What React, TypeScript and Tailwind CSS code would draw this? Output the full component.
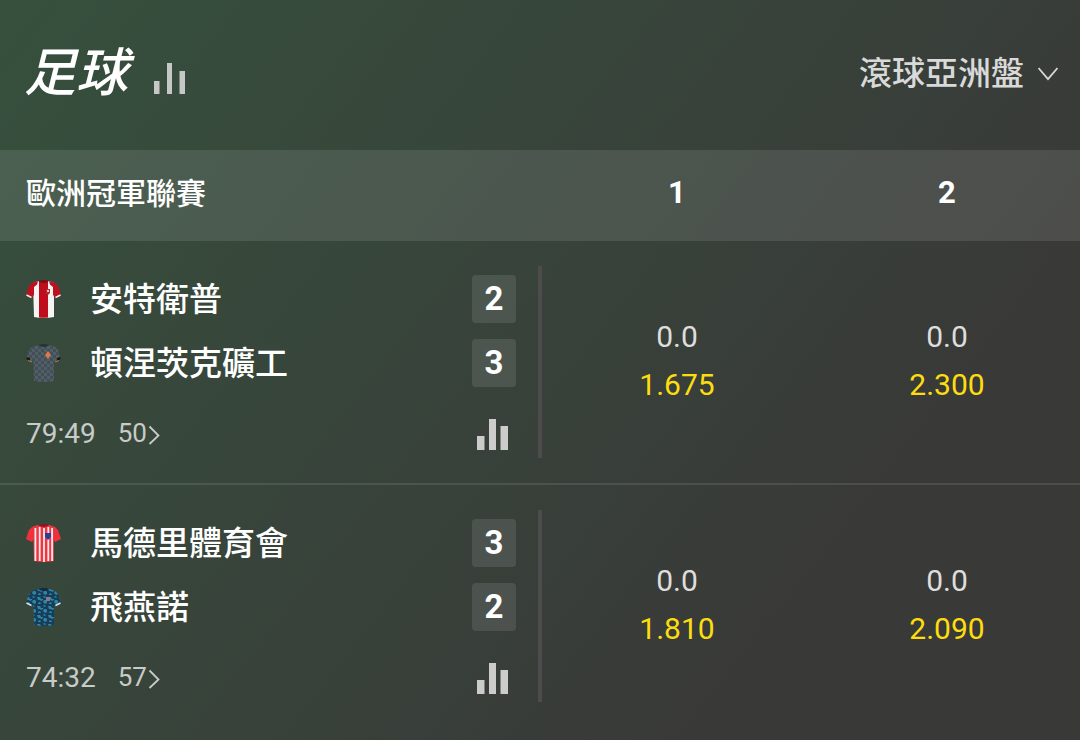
import React, { useState } from 'react';

type Team = { name: string; score: number; shirt: React.ReactNode };
type Match = { id: string; time: string; markets: number; teams: Team[]; odds: { line: string; price: string }[] };

const BODY = 'M12 2 Q18 4 23 2 L28 4 L28 38 Q18 40 8 38 L7 4 Z';
const LEFT_SLEEVE = 'M12 2 L6 4 Q3 6 2 10 L0 16 L6 19 L9 14 Z';
const RIGHT_SLEEVE = 'M23 2 L29 4 Q32 6 33 10 L35 16 L29 19 L26 14 Z';
const COLLAR = 'M12 2 Q18 0 23 2 Q18 6 12 2 Z';

function RedWhiteShirt() {
  return (
    <svg className="w-9 h-10" viewBox="0 0 36 40" aria-hidden="true">
      <path d={BODY} fill="#f6f3f3" />
      <path d={LEFT_SLEEVE} fill="#c01020" />
      <path d={RIGHT_SLEEVE} fill="#c01020" />
      <path d="M8 8 L13 4 V20 H8 Z M22 4 L27 8 V20 H22 Z" fill="#f6f3f3" />
      <path d="M0.5 16 L5.5 18.5 M34.5 16 L29.5 18.5" stroke="#f3eeee" strokeWidth="1.5" />
      <path d="M13 2 Q18 4 22 2 L22 38.5 Q18 39 13 38.5 Z" fill="#c00d1d" />
      <path d={COLLAR} fill="#7c0c16" />
      <path d="M20 10 h4 v4 l-2 2 l-2 -2 Z" fill="#b72c2f" />
      <path d="M21 11 h2 v2 h-2 Z" fill="#e8c9b0" />
    </svg>
  );
}

function CheckedShirt() {
  return (
    <svg className="w-9 h-10" viewBox="0 0 36 40" aria-hidden="true">
      <defs>
        <pattern id="checks" width="6" height="6" patternUnits="userSpaceOnUse">
          <rect width="6" height="6" fill="#434f57" />
          <path d="M0 0 h3 v3 h-3 Z M3 3 h3 v3 h-3 Z" fill="#515e66" />
        </pattern>
      </defs>
      <path d={LEFT_SLEEVE} fill="url(#checks)" />
      <path d={RIGHT_SLEEVE} fill="url(#checks)" />
      <path d={BODY} fill="url(#checks)" />
      <path d={COLLAR} fill="#273238" />
      <path d="M0 16 L4 18 L4 15 L1 14 Z M35 16 L31 18 L31 15 L34 14 Z" fill="#17191b" />
      <path d="M2 17.5 L6 19 M33 17.5 L29 19" stroke="#c77343" strokeWidth="1" fill="none" />
      <path d="M22 8 L25 12 L22 16 L19 12 Z" fill="#e0764a" />
    </svg>
  );
}

function StripedShirt() {
  return (
    <svg className="w-9 h-10" viewBox="0 0 36 40" aria-hidden="true">
      <path d={LEFT_SLEEVE} fill="#f0303c" />
      <path d={RIGHT_SLEEVE} fill="#f0303c" />
      <path d={BODY} fill="#ee3541" />
      <path
        d="M8.5 5 h1.8 v33 h-1.8 Z M12.8 4 h1.8 v34 h-1.8 Z M17.1 5 h1.8 v34 h-1.8 Z M21.4 4 h1.8 v34 h-1.8 Z M25.2 5 h1.8 v33 h-1.8 Z"
        fill="#f8eaec"
      />
      <path d={COLLAR} fill="#8d1620" />
      <path d="M19 10 h6 v4 l-3 3 l-3 -3 Z" fill="#2c3f91" />
    </svg>
  );
}

function CamoShirt() {
  return (
    <svg className="w-9 h-10" viewBox="0 0 36 40" aria-hidden="true">
      <defs>
        <pattern id="camo" width="11" height="9" patternUnits="userSpaceOnUse">
          <rect width="11" height="9" fill="#173d5c" />
          <path d="M0 1 h3 l1 2 h2 v1 l-2 1 l-1 -1 h-2 Z M6 6 l1 -2 h2 l1 1 v2 l-2 1 Z M1 7 l2 -1 l1 2 h-3 Z M7 0 l2 1 l-1 1 l-2 -1 Z" fill="#2f86a0" />
        </pattern>
      </defs>
      <path d={LEFT_SLEEVE} fill="url(#camo)" />
      <path d={RIGHT_SLEEVE} fill="url(#camo)" />
      <path d={BODY} fill="url(#camo)" />
      <path d={COLLAR} fill="#132942" />
      <path d="M0.5 16 L5.5 18.5 M34.5 16 L29.5 18.5" stroke="#d8e4e8" strokeWidth="1.5" fill="none" />
      <path d="M20 10 h4 v4 h-4 Z" fill="#8b7b8d" />
    </svg>
  );
}

const matches: Match[] = [
  {
    id: 'm1',
    time: '79:49',
    markets: 50,
    teams: [
      { name: '安特衛普', score: 2, shirt: <RedWhiteShirt /> },
      { name: '頓涅茨克礦工', score: 3, shirt: <CheckedShirt /> },
    ],
    odds: [
      { line: '0.0', price: '1.675' },
      { line: '0.0', price: '2.300' },
    ],
  },
  {
    id: 'm2',
    time: '74:32',
    markets: 57,
    teams: [
      { name: '馬德里體育會', score: 3, shirt: <StripedShirt /> },
      { name: '飛燕諾', score: 2, shirt: <CamoShirt /> },
    ],
    odds: [
      { line: '0.0', price: '1.810' },
      { line: '0.0', price: '2.090' },
    ],
  },
];

function MatchRow({ match }: { match: Match }) {
  return (
    <article className="grid grid-cols-2 py-[25px] border-b-2 border-white/10 last:border-b-0">
      <div className="pl-[26px] pr-6 pt-[9px]">
        <div className="flex flex-col gap-4">
          {match.teams.map((team) => (
            <div key={team.name} className="flex items-center h-12">
              {team.shirt}
              <span className="ml-7 pt-0.5 flex-1 text-[33px] leading-12 font-medium">{team.name}</span>
              <span className="w-11 h-12 rounded-sm bg-white/10 text-center text-[33px] leading-12 font-bold">{team.score}</span>
            </div>
          ))}
        </div>
        <div className="flex items-center mt-6 h-[47px] text-[#c8cbc8]">
          <span className="pb-0.5 text-[28px]">{match.time}</span>
          <a href="#markets" className="ml-[22px] flex items-center text-[26px]">
            <span className="pb-0.5">{match.markets}</span>
            <svg className="w-3 h-5 ml-px" viewBox="0 0 12 20" fill="none" stroke="currentColor" strokeWidth="1.8">
              <path d="M1.5 1.5 L10.5 10.5 L1.5 19" />
            </svg>
          </a>
          <button className="ml-auto mr-2" aria-label="統計">
            <svg className="w-[31px] h-[31px]" viewBox="0 0 31 31" fill="#cbcccb">
              <path d="M0 17 h7.5 v14 h-7.5 Z M12 0 h7 v31 h-7 Z M23.5 7 h7.5 v24 h-7.5 Z" />
            </svg>
          </button>
        </div>
      </div>
      <div className="flex">
        <div className="w-1 -ml-0.5 bg-[#4d4b4c]" />
        <div className="flex-1 grid grid-cols-2 gap-1 pl-0.5 pb-0.5">
          {match.odds.map((odd, i) => (
            <button key={i} className="flex flex-col items-center justify-center text-[30px] leading-12">
              <span className="text-[#dededd]">{odd.line}</span>
              <span className="text-[#fddd10]">{odd.price}</span>
            </button>
          ))}
        </div>
      </div>
    </article>
  );
}

export default function App() {
  const [market, setMarket] = useState('ah');

  return (
    <main className="min-h-screen overflow-hidden bg-[linear-gradient(128deg,#36503d_0%,#393938_78%)] text-white font-[Roboto,'Noto_Sans_CJK_TC',sans-serif]">
      <header className="flex items-center justify-between h-[150px] pl-6 pr-[22px] pb-1">
        <div className="flex items-center">
          <h1 className="pt-0.5 text-[52px] leading-none font-medium italic">足球</h1>
          <svg className="w-8 h-8 ml-[26px] mt-2.5" viewBox="0 0 32 32" fill="#c5c8c6" aria-hidden="true">
            <path d="M0 19 h5.5 v13 h-5.5 Z M13 1 h5 v31 h-5 Z M25.5 9 h5.5 v23 h-5.5 Z" />
          </svg>
        </div>
        <label className="relative flex items-center text-[#d8d9d8]">
          <select
            aria-label="盤口"
            value={market}
            onChange={(e) => setMarket(e.target.value)}
            className="appearance-none bg-transparent pt-0.5 pr-[34px] text-[33px] font-medium outline-none"
          >
            <option value="ah">滾球亞洲盤</option>
          </select>
          <svg className="absolute right-0 w-5 h-3.5 mt-0.5 pointer-events-none" viewBox="0 0 20 14" fill="none" stroke="currentColor" strokeWidth="1.8">
            <path d="M0.5 1 L10 12 L19.5 1" />
          </svg>
        </label>
      </header>

      <section>
        <div className="grid grid-cols-2 items-center h-[91px] pb-1 bg-white/10">
          <h2 className="pl-[26px] text-[30px] font-medium">歐洲冠軍聯賽</h2>
          <div className="grid grid-cols-2 gap-1 pl-1 text-center text-[31px] font-bold">
            <span>1</span>
            <span>2</span>
          </div>
        </div>
        {matches.map((match) => (
          <MatchRow key={match.id} match={match} />
        ))}
      </section>
    </main>
  );
}
